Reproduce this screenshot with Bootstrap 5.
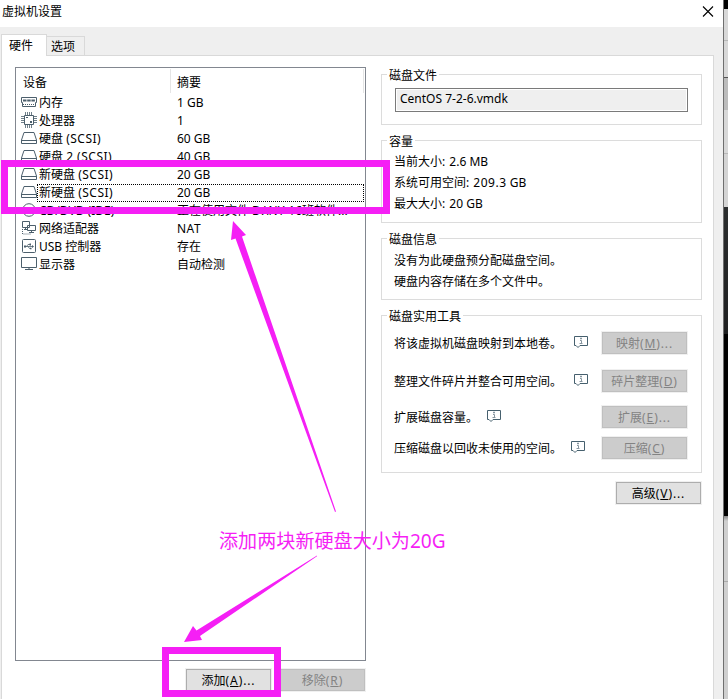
<!DOCTYPE html>
<html lang="zh-CN">
<head>
<meta charset="utf-8">
<meta name="viewport" content="width=device-width, initial-scale=1">
<title>虚拟机设置</title>
<link href="https://cdn.jsdelivr.net/npm/bootstrap@5.3.0/dist/css/bootstrap.min.css" rel="stylesheet">
<style>
  body { width: 728px; height: 699px; font: 12px/18px "Noto Sans", "Noto Sans CJK SC", sans-serif; color: #000; background: #fff; }
  svg { display: block; flex: none; }
  .vm-window { width: 724px; background: #efefef; border-right: 1px solid #6f6f6f; }
  .desk { width: 4px; background: linear-gradient(#000 0 9px, #d8d8d8 9px 40px, #b8b8b8 40px 41px, #d8d8d8 41px 77px, #555 77px 78px, #bcbcbc 78px 110px, #d8d8d8 110px 153px, #b8b8b8 153px 154px, #d4d4d4 154px 207px, #2c2e2f 207px, #1f2021 334px, #000 334px 516px, #888 516px, #cfcfcf 521px 581px, #aaa 581px 582px, #cfcfcf 582px); }
  .titlebar { height: 27px; padding: 0 9px 3px 2px; }
  .tabs { height: 28px; padding-left: 1px; }
  .tab-on { width: 46px; height: 22px; border: 1px solid #d9d9d9; border-bottom: 0; background: #fff; padding-left: 7px; margin-bottom: -1px; line-height: 21px; z-index: 1; position: relative; }
  .tab-off { width: 38px; height: 19px; border: 1px solid #d9d9d9; border-left: 0; border-bottom: 0; padding-left: 4px; line-height: 20px; }
  .pane { width: 713px; height: 644px; margin-left: 1px; border: 1px solid #d9d9d9; border-bottom: 0; background: #fff; padding: 11px 11px 0 13px; }
  .device-list { width: 351px; height: 594px; border: 1px solid #828790; }
  .list-head { height: 24px; margin: 1px 1px 1px 7px; line-height: 27px; }
  .head-name { width: 148px; border-right: 1px solid #e5e5e5; }
  .head-sum { padding-left: 6px; border-right: 1px solid #e5e5e5; }
  .dev { height: 18px; padding-left: 5px; padding-right: 1px; }
  .dev-text { border: 1px solid transparent; height: 18px; line-height: 15px; padding-left: 1px; }
  .dev-text.focused { border: 1px dotted #000; }
  .dev-name { width: 138px; }
  .wide { letter-spacing: .5px; }
  .list-actions { width: 350px; padding-top: 8px; gap: 9px; }
  .wbtn { width: 85px; height: 22px; border: 1px solid #adadad; background: #e1e1e1; line-height: 22px; outline: 1px solid #f0f0f0; text-align: center; }
  .wbtn .wide { letter-spacing: .9px; }
  .wbtn.off { background: #ccc; border-color: #bfbfbf; color: #838383; }
  .side { width: 321px; }
  .group { border: 1px solid #dcdcdc; padding: 0 13px 0 12px; }
  .group-title { line-height: 20px; height: 18px; margin-top: -9px; margin-left: -7px; padding: 0 2px; background: #fff; width: max-content; }
  .g-file { margin-top: 7px; height: 51px; }
  .g-cap { margin-top: 15px; height: 83px; }
  .g-info { margin-top: 15px; height: 62px; }
  .g-tool { margin-top: 15px; height: 158px; }
  .file-box { height: 24px; margin-top: 4px; margin-left: 1px; border: 1px solid #7a7a7a; box-shadow: inset 0 0 0 1px #fff; background: #efefef; padding-left: 4px; line-height: 19px; }
  .lines { line-height: 21px; padding-top: 2px; }
  .g-cap .lines { padding-top: 1px; }
  .tool { height: 22px; margin-right: 1px; }
  .tool > span { padding-top: 2px; }
  .tool-1 { margin-top: 7px; }
  .tool-2 { margin-top: 16px; }
  .tool-3 { margin-top: 14px; }
  .tool-4 { margin-top: 9px; }
  .note { width: 14px; height: 12px; margin-bottom: 2px; margin-left: 12px; }
  .note.near { margin-left: 9px; }
  .advanced { margin-top: 9px; margin-right: 1px; }
  .overlay { position: absolute; left: 0; top: 0; z-index: 5; }
  .callout-text { position: absolute; left: 219px; top: 528px; font-size: 19.1px; line-height: 27px; color: #f51ff5; z-index: 6; white-space: nowrap; }
</style>
<script src="https://cdn.jsdelivr.net/npm/bootstrap@5.3.0/dist/js/bootstrap.bundle.min.js"></script>
</head>
<body class="position-relative overflow-hidden d-flex text-nowrap">
<svg class="d-none">
  <symbol id="disk" viewBox="0 0 16 18"><path d="M3 2.500h10l2.500 7.500v3.500H.5V10z" fill="#fff" stroke="#4c5f6c"/><path d="M1 10.500h14" stroke="#4c5f6c"/></symbol>
  <symbol id="info" viewBox="0 0 14 12"><path d="M.5.5h13v9H6l-2 2-2-2H.5z" fill="#fff" stroke="#46606e"/><path d="M6.500 2h1v1h-1zM6 4.500h1.500V8M5.500 7.500h3" fill="none" stroke="#8796a0"/></symbol>
</svg>

<main class="vm-window flex-shrink-0">
  <header class="titlebar bg-white d-flex justify-content-between align-items-center">
    <span>虚拟机设置</span>
    <svg width="12" height="12" viewBox="0 0 12 12"><path d="M1 .5l10 10M11 .5l-10 10" stroke="#000" stroke-width="1.100"/></svg>
  </header>
  <nav class="tabs d-flex align-items-end">
    <div class="tab-on">硬件</div>
    <div class="tab-off">选项</div>
  </nav>
  <section class="pane d-flex justify-content-between">
    <div>
      <div class="device-list">
        <div class="list-head d-flex"><div class="head-name">设备</div><div class="head-sum flex-grow-1">摘要</div></div>
        <div class="dev d-flex"><svg width="16" height="18"><path d="M.5 3.500h15v5h-1v4h-13v-4h-1z" fill="#fff" stroke="#4c5f6c"/><path d="M2 6.500h12" stroke="#4c5f6c" stroke-width="2" stroke-dasharray="3.500 .7"/><path d="M2 10.500h12" stroke="#4c5f6c" stroke-dasharray="1 1"/></svg><div class="dev-text d-flex flex-grow-1"><span class="dev-name">内存</span><span>1 GB</span></div></div>
        <div class="dev d-flex"><svg width="16" height="18"><path d="M3.500 3.500h9v9h-9z" fill="#fff" stroke="#4c5f6c"/><path d="M4.500 0v3M6.500 0v3M8.500 0v3M10.500 0v3M4.500 13v3M6.500 13v3M8.500 13v3M10.500 13v3M0 4.500h3M0 6.500h3M0 8.500h3M0 10.500h3M13 4.500h3M13 6.500h3M13 8.500h3M13 10.500h3" stroke="#70808a"/><path d="M5 5h2v1H5zM9 9h2v2H9z" fill="#4c5f6c"/></svg><div class="dev-text d-flex flex-grow-1"><span class="dev-name">处理器</span><span>1</span></div></div>
        <div class="dev d-flex"><svg width="16" height="18"><use href="#disk"/></svg><div class="dev-text d-flex flex-grow-1"><span class="dev-name">硬盘 <span class="wide">(SCSI)</span></span><span>60 GB</span></div></div>
        <div class="dev d-flex"><svg width="16" height="18"><use href="#disk"/></svg><div class="dev-text d-flex flex-grow-1"><span class="dev-name">硬盘 <span class="wide">2 (SCSI)</span></span><span>40 GB</span></div></div>
        <div class="dev d-flex"><svg width="16" height="18"><use href="#disk"/></svg><div class="dev-text d-flex flex-grow-1"><span class="dev-name">新硬盘 <span class="wide">(SCSI)</span></span><span>20 GB</span></div></div>
        <div class="dev d-flex"><svg width="16" height="18"><use href="#disk"/></svg><div class="dev-text focused d-flex flex-grow-1"><span class="dev-name">新硬盘 <span class="wide">(SCSI)</span></span><span>20 GB</span></div></div>
        <div class="dev d-flex"><svg width="16" height="18"><circle cx="8" cy="8" r="6.300" fill="none" stroke="#4c5f6c"/><circle cx="8" cy="8" r="1.500" fill="none" stroke="#4c5f6c"/></svg><div class="dev-text d-flex flex-grow-1"><span class="dev-name">CD/DVD (IDE)</span><span>正在使用文件 D:\NY-16班软件...</span></div></div>
        <div class="dev d-flex"><svg width="16" height="18"><path d="M1.500 1.500h7v6h-7zM6.500 5.500h8v5h-8z" fill="#fff" stroke="#4c5f6c"/><path d="M3 9.500h3M8 12.500h5M10.500 11v2M4.500 8v2" stroke="#4c5f6c"/><path d="M1.500 9v5h8" fill="none" stroke="#4c5f6c" stroke-dasharray="1 1"/></svg><div class="dev-text d-flex flex-grow-1"><span class="dev-name">网络适配器</span><span class="wide">NAT</span></div></div>
        <div class="dev d-flex"><svg width="16" height="18"><rect x="1.500" y="1.500" width="13" height="13" rx="1" fill="#fff" stroke="#4c5f6c"/><path d="M4 8.500h8M5.500 8.500L7 6.500h2M7 8.500L8.500 10.500H10" fill="none" stroke="#4c5f6c" stroke-width=".8"/><path d="M11 7l2 1.500-2 1.500zM3 7.500h2v2H3zM8.500 5.500H10v2H8.500zM9 9.700h1.500v1.600H9z" fill="#4c5f6c"/></svg><div class="dev-text d-flex flex-grow-1"><span class="dev-name">USB 控制器</span><span>存在</span></div></div>
        <div class="dev d-flex"><svg width="16" height="18"><path d="M.5 1.500h15v10H.5z" fill="#fff" stroke="#4c5f6c"/><path d="M4 13.500h8" stroke="#4c5f6c"/><path d="M7 12h2v1H7z" fill="#a0abb2"/></svg><div class="dev-text d-flex flex-grow-1"><span class="dev-name">显示器</span><span>自动检测</span></div></div>
      </div>
      <div class="list-actions d-flex justify-content-end">
        <div class="wbtn">添加<span class="wide">(<u>A</u>)...</span></div><div class="wbtn off">移除<span class="wide">(<u>R</u>)</span></div>
      </div>
    </div>

    <div class="side">
      <div class="group g-file"><div class="group-title">磁盘文件</div><div class="file-box">CentOS 7-2-6.vmdk</div></div>
      <div class="group g-cap"><div class="group-title">容量</div><div class="lines">当前大小<span class="wide">: </span>2.6 MB<br>系统可用空间<span class="wide">: </span><span class="wide">209.3</span> GB<br>最大大小<span class="wide">: </span>20 GB</div></div>
      <div class="group g-info"><div class="group-title">磁盘信息</div><div class="lines">没有为此硬盘预分配磁盘空间。<br>硬盘内容存储在多个文件中。</div></div>
      <div class="group g-tool"><div class="group-title">磁盘实用工具</div>
        <div class="tool tool-1 d-flex align-items-center"><span>将该虚拟机磁盘映射到本地卷。</span><svg class="note"><use href="#info"/></svg><div class="wbtn off ms-auto">映射<span class="wide">(<u>M</u>)...</span></div></div>
        <div class="tool tool-2 d-flex align-items-center"><span>整理文件碎片并整合可用空间。</span><svg class="note"><use href="#info"/></svg><div class="wbtn off ms-auto">碎片整理<span class="wide">(<u>D</u>)</span></div></div>
        <div class="tool tool-3 d-flex align-items-center"><span>扩展磁盘容量。</span><svg class="note near"><use href="#info"/></svg><div class="wbtn off ms-auto">扩展<span class="wide">(<u>E</u>)...</span></div></div>
        <div class="tool tool-4 d-flex align-items-center"><span>压缩磁盘以回收未使用的空间。</span><svg class="note near"><use href="#info"/></svg><div class="wbtn off ms-auto">压缩<span class="wide">(<u>C</u>)</span></div></div>
      </div>
      <div class="wbtn advanced ms-auto">高级<span class="wide">(<u>V</u>)...</span></div>
    </div>
  </section>
</main>
<aside class="desk flex-shrink-0"></aside>

<svg class="overlay" width="728" height="699" fill="#f51ff5">
  <path d="M4.500 163.500h382v47h-382z" fill="none" stroke="#f51ff5" stroke-width="7"/>
  <path d="M165.500 650.500h112v43h-112z" fill="none" stroke="#f51ff5" stroke-width="7"/>
  <path d="M233 221l13 14-4 1.500L336 511.500l-1 .5L235.500 238.500l-4.500 1.500z"/>
  <path d="M184 642l9-16 3.500 4.500L317 555.500v.8L200 636l2 4z"/>
</svg>
<div class="callout-text">添加两块新硬盘大小为20G</div>
</body>
</html>
